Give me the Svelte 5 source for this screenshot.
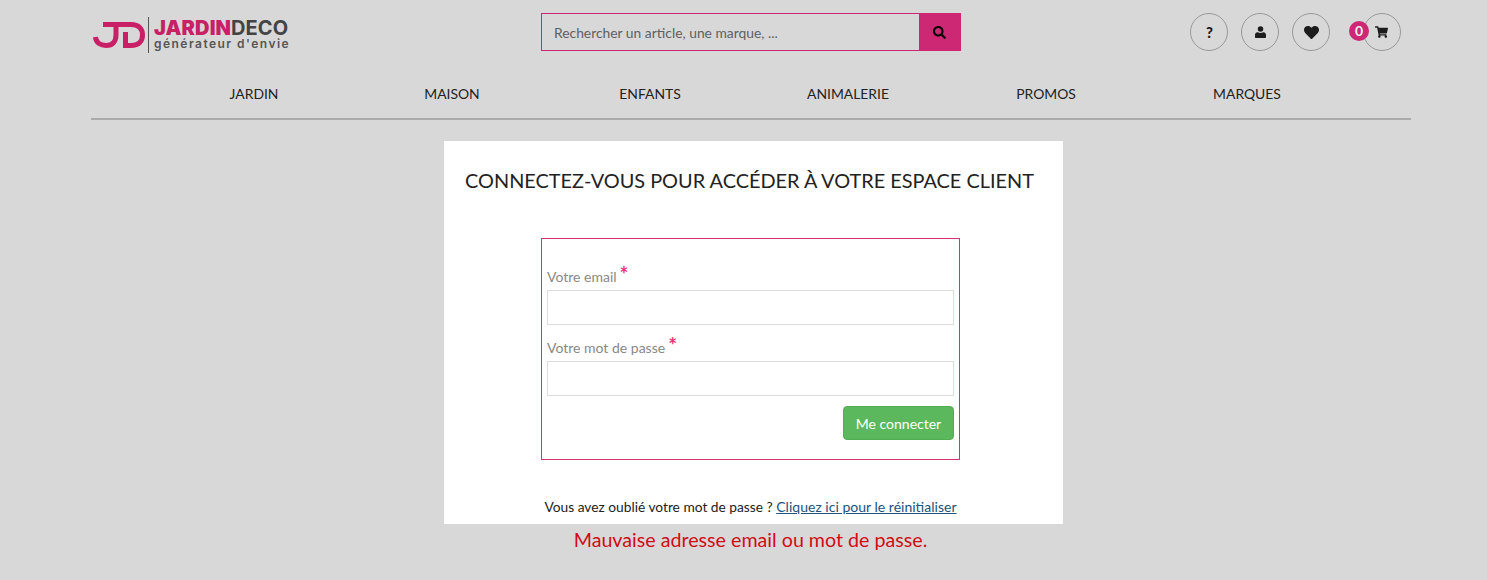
<script lang="ts">
  const navItems = ['JARDIN', 'MAISON', 'ENFANTS', 'ANIMALERIE', 'PROMOS', 'MARQUES'];
</script>

<div class="page">
  <header class="top">
    <a class="logo" href="#home">
      <svg class="mark" viewBox="0 0 52 30" width="52" height="30" aria-hidden="true">
        <path d="M2.500 17C3 23 8 25.500 13 25.500C20 25.500 23 21 23 15V4.500H10" fill="none" stroke="#c91f66" stroke-width="5"/>
        <path d="M23 4.500H38C46 4.500 49.500 9 49.500 15C49.500 21 46 25.500 38 25.500H32.500V12" fill="none" stroke="#c91f66" stroke-width="5"/>
      </svg>
      <span class="sep"></span>
      <span class="brand">
        <span class="name"><b>JARDIN</b>DECO</span>
        <span class="tag">générateur d'envie</span>
      </span>
    </a>

    <form class="search">
      <input type="text" placeholder="Rechercher un article, une marque, ..." />
      <button type="button" aria-label="Rechercher">
        <svg viewBox="0 0 512 512" width="13" height="13"><path d="M505 442.700L405.300 343c-4.500-4.500-10.600-7-17-7H372c27.600-35.300 44-79.700 44-128C416 93.100 322.900 0 208 0S0 93.100 0 208s93.100 208 208 208c48.300 0 92.700-16.400 128-44v16.300c0 6.400 2.500 12.500 7 17l99.700 99.700c9.400 9.400 24.600 9.400 33.900 0l28.300-28.300c9.400-9.400 9.400-24.600.1-34zM208 336c-70.700 0-128-57.200-128-128 0-70.700 57.200-128 128-128 70.700 0 128 57.200 128 128 0 70.700-57.200 128-128 128z"/></svg>
      </button>
    </form>

    <div class="actions">
      <a class="round help" href="#help">?</a>
      <a class="round" href="#account" aria-label="Compte">
        <svg viewBox="0 0 12 13" width="11" height="12"><circle cx="6" cy="3.200" r="3"/><path d="M0.800 13c-.5 0-.8-.3-.8-.8V9.800c0-1.700 1.200-3 2.800-3h.3c.8.600 1.800.9 2.900.9s2.100-.3 2.900-.9h.3c1.600 0 2.800 1.300 2.800 3v2.400c0 .5-.3.800-.8.800z"/></svg>
      </a>
      <a class="round" href="#wishlist" aria-label="Favoris">
        <svg viewBox="0 0 512 512" width="15" height="15"><path d="M462.300 62.600C407.500 15.900 326 24.300 275.700 76.200L256 96.500l-19.700-20.300C186.100 24.300 104.500 15.900 49.700 62.600c-62.800 53.600-66.100 149.800-9.900 207.900l193.500 199.800c12.500 12.900 32.800 12.900 45.300 0l193.500-199.800c56.300-58.100 53-154.300-9.800-207.900z"/></svg>
      </a>
      <a class="round cart" href="#cart" aria-label="Panier">
        <span class="badge">0</span>
        <svg viewBox="0 0 576 512" width="13" height="12"><path d="M528.120 301.319l47.273-208C578.806 78.301 567.391 64 551.990 64H159.208l-9.166-44.810C147.758 8.021 137.930 0 126.529 0H24C10.745 0 0 10.745 0 24v16c0 13.255 10.745 24 24 24h69.883l70.248 343.435C147.325 417.100 136 435.222 136 456c0 30.928 25.072 56 56 56s56-25.072 56-56c0-15.674-6.447-29.835-16.824-40h209.647C430.447 426.165 424 440.326 424 456c0 30.928 25.072 56 56 56s56-25.072 56-56c0-22.172-12.888-41.332-31.579-50.405l5.517-24.276c3.413-15.018-8.002-29.319-23.403-29.319H218.117l-6.545-32h293.145c11.206 0 20.920-7.754 23.403-18.681z"/></svg>
      </a>
    </div>
  </header>

  <nav class="menu">
    {#each navItems as item}
      <a href="#{item.toLowerCase()}">{item}</a>
    {/each}
  </nav>

  <main class="card">
    <h1>CONNECTEZ-VOUS POUR ACCÉDER À VOTRE ESPACE CLIENT</h1>
    <form class="login">
      <label for="email">Votre email<sup>*</sup></label>
      <input id="email" type="email" />
      <label for="pass">Votre mot de passe<sup>*</sup></label>
      <input id="pass" type="password" />
      <div class="submit">
        <button type="button">Me connecter</button>
      </div>
    </form>
    <p class="forgot">Vous avez oublié votre mot de passe ? <a href="#reset">Cliquez ici pour le réinitialiser</a></p>
  </main>
  <p class="error">Mauvaise adresse email ou mot de passe.</p>
</div>

<style>
  :global(body) {
    margin: 0;
    background: #d8d8d8;
    font-family: Lato, "Liberation Sans", sans-serif;
    color: #222;
  }

  .page {
    width: 1320px;
    margin-left: 91px;
  }

  .top {
    display: flex;
    align-items: flex-start;
    height: 68px;
    padding-top: 13px;
    box-sizing: border-box;
  }

  .logo {
    display: flex;
    align-items: flex-start;
    width: 450px;
    height: 40px;
    text-decoration: none;
  }

  .mark {
    margin: 7px 0 0 2px;
  }

  .sep {
    width: 1px;
    height: 36px;
    margin: 4px 5px 0 3px;
    background: #555;
  }

  .brand {
    display: flex;
    flex-direction: column;
    margin-top: 5px;
  }

  .name {
    font: 700 20px/20px Inter, sans-serif;
    letter-spacing: 0.1px;
    color: #444;
  }

  .name b {
    color: #c91f66;
  }

  .tag {
    font: 600 12px/11px Inter, sans-serif;
    letter-spacing: 1.470px;
    color: #555;
  }

  .search {
    display: flex;
    width: 420px;
    height: 38px;
    box-sizing: border-box;
    border: 1px solid #cd2873;
  }

  .search input {
    flex: 1;
    min-width: 0;
    border: 0;
    padding: 0 12px;
    background: transparent;
    font: 13.850px Lato, sans-serif;
    color: #555;
    outline: none;
  }

  .search input::placeholder {
    color: #5f5f5f;
    opacity: 1;
  }

  .search button {
    display: flex;
    align-items: center;
    justify-content: center;
    width: 41px;
    border: 0;
    padding: 0;
    background: #cd2873;
  }

  .actions {
    display: flex;
    margin-left: auto;
    margin-right: 10px;
    gap: 13px;
  }

  .round {
    position: relative;
    display: flex;
    align-items: center;
    justify-content: center;
    width: 38px;
    height: 38px;
    box-sizing: border-box;
    border: 1px solid #999;
    border-radius: 50%;
    color: #1c1c1c;
    text-decoration: none;
  }

  .round svg {
    fill: #1c1c1c;
  }

  .help {
    padding-left: 1px;
    font-weight: 900;
    font-size: 15px;
  }

  .cart {
    margin-left: 20px;
  }

  .cart svg {
    margin-right: 2px;
  }

  .badge {
    position: absolute;
    left: -15px;
    top: 7px;
    width: 20px;
    height: 20px;
    border-radius: 50%;
    background: #cd2873;
    color: #eee;
    font-size: 14px;
    font-weight: 700;
    line-height: 20px;
    text-align: center;
  }

  .menu {
    display: grid;
    grid-template-columns: repeat(5, 198px) 204px;
    padding-left: 64px;
    height: 50px;
    border-bottom: 2px solid #aaa;
  }

  .menu a {
    padding-top: 17px;
    font-size: 13.900px;
    line-height: 18px;
    color: #222;
    text-align: center;
    text-decoration: none;
  }

  .card {
    width: 619px;
    height: 383px;
    margin: 21px 0 0 353px;
    padding-top: 26px;
    box-sizing: border-box;
    background: #fff;
  }

  h1 {
    margin: 0;
    padding-right: 8px;
    font-size: 19.900px;
    font-weight: 400;
    line-height: 26px;
    color: #222;
    text-align: center;
  }

  .login {
    width: 419px;
    height: 222px;
    margin: 45px 0 0 97px;
    padding: 24px 5px 0;
    box-sizing: border-box;
    border: 1px solid #d6307c;
  }

  label {
    display: block;
    height: 27px;
    padding-top: 4px;
    box-sizing: border-box;
    font-size: 14px;
    line-height: 20px;
    color: #888;
  }

  label sup {
    margin-left: 3px;
    color: #e8337f;
    font-size: 21px;
    font-weight: 700;
    line-height: 0;
    vertical-align: 0;
  }

  .login input {
    display: block;
    width: 100%;
    height: 35px;
    margin-bottom: 9px;
    box-sizing: border-box;
    border: 1px solid #ddd;
    background: #fff;
  }

  .submit {
    display: flex;
    justify-content: flex-end;
    margin-top: 10px;
  }

  .submit button {
    width: 111px;
    height: 34px;
    border: 1px solid #52ad52;
    border-radius: 4px;
    background: #5cb85c;
    color: #fff;
    font: 14px Lato, sans-serif;
  }

  .forgot {
    margin: 38px 0 0;
    padding-right: 6px;
    font-size: 13.750px;
    line-height: 18px;
    text-align: center;
    color: #222;
  }

  .forgot a {
    font-size: 14.050px;
    color: #23527c;
  }

  .error {
    margin: 3px 0 0;
    padding-right: 1px;
    font-size: 19.670px;
    line-height: 26px;
    text-align: center;
    color: #d10c16;
  }
</style>
